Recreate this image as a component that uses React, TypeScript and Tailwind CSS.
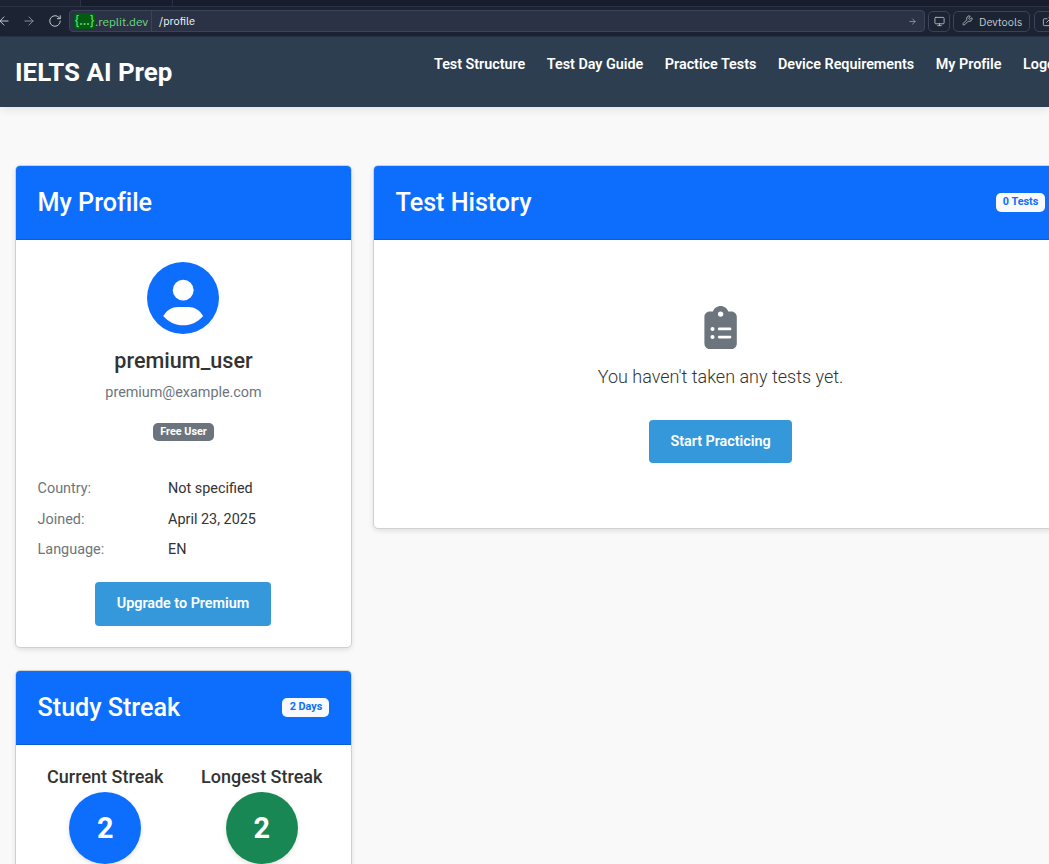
import type { ReactNode } from 'react';
import { ArrowLeft, ArrowRight, RotateCw, Monitor, Wrench, ExternalLink } from 'lucide-react';
import { FaClipboardList } from 'react-icons/fa6';

const navItems = ['Test Structure', 'Test Day Guide', 'Practice Tests', 'Device Requirements', 'My Profile', 'Logout'];

const details = [
  { label: 'Country:', value: 'Not specified' },
  { label: 'Joined:', value: 'April 23, 2025' },
  { label: 'Language:', value: 'EN' },
];

function BrowserBar() {
  return (
    <div className="flex h-[37px] flex-col bg-[#1c2333] font-['IBM_Plex_Sans','Noto_Sans',sans-serif] text-[#c2c8cc]">
      <div className="flex h-[7px] shrink-0 border-b border-[#2b3245] bg-[#171d2d]">
        <div className="w-[81px] shrink-0 border-r border-[#2b3245] bg-[#1c2333]" />
        <div className="w-[92px] shrink-0 border-r border-[#2b3245]" />
      </div>
      <div className="flex h-[30px] w-[1049px] items-center overflow-hidden border-b border-[#2b3245] pb-px">
        <ArrowLeft className="-ml-[3px] size-[14px] shrink-0" strokeWidth={1.7} />
        <ArrowRight className="ml-[11px] size-[14px] shrink-0 text-[#8a909c]" strokeWidth={1.7} />
        <RotateCw className="ml-[12px] size-[14px] shrink-0" strokeWidth={1.7} />
        <div className="ml-[7px] flex h-[22px] w-[856px] shrink-0 items-center rounded border border-[#3c445c] bg-[#2b3245]">
          <div className="flex h-full w-[82px] items-center border-r border-[#3c445c] pl-[4px] text-[12px] text-[#6cd97e]">
            <span className="h-[16px] w-[21px] rounded-[3px] bg-[#005c10] text-center font-medium leading-[16px]">{'{...}'}</span>
            <span className="pt-px leading-4 tracking-[-0.08px]">.replit.dev</span>
          </div>
          <span className="ml-[7px] text-[11px] leading-4 text-[#f5f9fc]">/profile</span>
          <ArrowRight className="ml-auto mr-[7px] size-[9px] text-[#a0a6b0]" strokeWidth={2} />
        </div>
        <div className="ml-[3px] flex h-[21px] w-[22px] shrink-0 items-center justify-center rounded-[5px] border border-[#3c445c]">
          <Monitor className="size-[11px]" strokeWidth={1.8} />
        </div>
        <div className="ml-[3px] flex h-[21px] w-[77px] shrink-0 items-center rounded-[5px] border border-[#3c445c] pl-2">
          <Wrench className="size-[11px] -translate-y-px" strokeWidth={1.8} />
          <span className="ml-[6px] pt-px text-[11px] leading-4">Devtools</span>
        </div>
        <div className="ml-1 flex h-[21px] w-[30px] shrink-0 items-center rounded-[5px] border border-[#3c445c] pl-[7px]">
          <ExternalLink className="size-[11px] shrink-0" strokeWidth={1.8} />
        </div>
      </div>
    </div>
  );
}

function SiteHeader() {
  return (
    <header className="relative flex h-[70px] items-start bg-[#2c3e50] shadow-[0_2px_9px_rgba(0,0,0,0.1)]">
      <h1 className="ml-[15px] mt-[17px] w-[419px] shrink-0 text-[25.9px] font-bold leading-9 text-white">IELTS AI Prep</h1>
      <nav className="mt-[16px] flex gap-[21.6px] whitespace-nowrap text-[14.4px] font-semibold leading-[23px] tracking-[-0.035px] text-white">
        {navItems.map((item) => (
          <a key={item}>{item}</a>
        ))}
      </nav>
    </header>
  );
}

function Card({ title, badge, className, children }: { title: string; badge?: string; className: string; children: ReactNode }) {
  return (
    <section className={`flex flex-col overflow-hidden rounded-[5px] border border-[#d0d1d2] bg-white shadow-[0_2px_5px_rgba(0,0,0,0.1)] ${className}`}>
      <div className="flex h-[74px] shrink-0 items-center justify-between border-b border-[#0b5ed7] bg-[#0d6efd] px-[21.6px]">
        <h2 className="pt-px text-[25.2px] font-[550] leading-[30px] tracking-[-0.04px] text-white">{title}</h2>
        {badge && (
          <span className="flex h-[19px] items-center rounded-[5px] bg-[#f8f9fa] px-[7.2px] pb-px text-[10.8px] font-bold leading-none text-[#0d6efd]">
            {badge}
          </span>
        )}
      </div>
      {children}
    </section>
  );
}

function Avatar() {
  return (
    <svg className="mr-[0.5px] mt-[22px] size-[72px] shrink-0" viewBox="0 0 72 72">
      <circle cx="36" cy="36" r="36" fill="#0d6efd" />
      <circle cx="36.2" cy="28.2" r="10.4" fill="#fff" />
      <path d="M16.2 54C20 48 25 45 31 45H41.400C47.400 45 52.400 48 56.200 54C51 60 44 63.300 36.200 63.300C28.400 63.300 21.400 60 16.200 54Z" fill="#fff" />
    </svg>
  );
}

function StreakCount({ label, value, color }: { label: string; value: number; color: string }) {
  return (
    <div className="flex w-[156.500px] flex-col items-center">
      <h3 className="text-[18px] font-medium leading-[22px]">{label}</h3>
      <div className={`mt-1 flex size-[72px] items-center justify-center rounded-full pt-0.5 text-[28.8px] font-bold text-white shadow-[0_2px_5px_rgba(0,0,0,0.12)] ${color}`}>
        {value}
      </div>
    </div>
  );
}

export default function App() {
  return (
    <div className="h-[864px] w-[1049px] overflow-hidden bg-[#f9f9f9] font-['Roboto',sans-serif] text-[#333]">
      <BrowserBar />
      <SiteHeader />
      <main className="flex items-start gap-[21px] pl-[15px] pt-[58px]">
        <div className="flex w-[337px] shrink-0 flex-col gap-[22px]">
          <Card title="My Profile" className="h-[483px]">
            <div className="flex flex-col items-center">
              <Avatar />
              <h3 className="mt-[14px] text-[21.6px] font-medium leading-[26px]">premium_user</h3>
              <p className="mt-[7px] text-[14.4px] leading-[23px] tracking-[-0.02px] text-[#6c757d]">premium@example.com</p>
              <span className="mt-[19px] flex h-[18px] items-center rounded-[5px] bg-[#6c757d] px-[7px] text-[10.8px] font-bold leading-none text-white">
                Free User
              </span>
              <dl className="mt-[36px] flex w-full flex-col gap-[7.600px] px-[21.6px] text-[14.4px] leading-[23px]">
                {details.map((row) => (
                  <div key={row.label} className="flex">
                    <dt className="w-[130.500px] text-[#6c757d]">{row.label}</dt>
                    <dd>{row.value}</dd>
                  </div>
                ))}
              </dl>
              <button className="mr-px mt-[20.800px] h-[44px] w-[176px] rounded-[4px] bg-[#3498db] text-[14.4px] font-semibold tracking-[-0.03px] text-white">Upgrade to Premium</button>
            </div>
          </Card>
          <Card title="Study Streak" badge="2 Days" className="h-[240px]">
            <div className="flex justify-center pt-[21px]">
              <StreakCount label="Current Streak" value={2} color="bg-[#0d6efd]" />
              <StreakCount label="Longest Streak" value={2} color="bg-[#198754]" />
            </div>
          </Card>
        </div>
        <Card title="Test History" badge="0 Tests" className="h-[364px] w-[695px] shrink-0">
          <div className="flex flex-col items-center">
            <FaClipboardList className="mt-[65.500px] size-[43.2px] text-[#6c757d]" />
            <p className="mt-[13.500px] text-[18px] font-light leading-[29px]">You haven't taken any tests yet.</p>
            <button className="mt-[29px] h-[43px] w-[143px] rounded-[4px] bg-[#3498db] text-[14.4px] font-semibold tracking-[-0.03px] text-white">Start Practicing</button>
          </div>
        </Card>
      </main>
    </div>
  );
}
